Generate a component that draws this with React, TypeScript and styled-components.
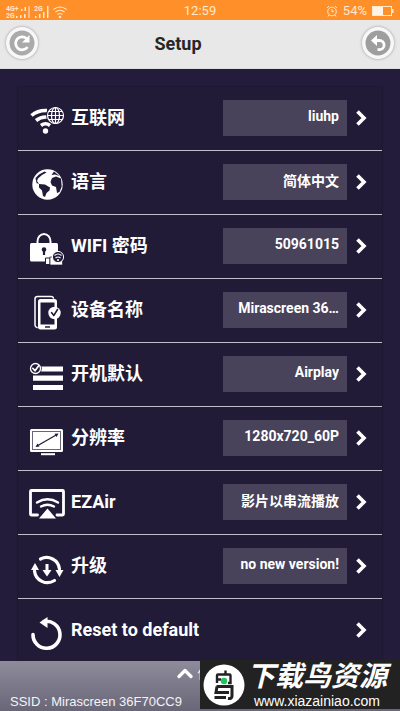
import React from "react";
import styled, { createGlobalStyle, css } from "styled-components";

const Global = createGlobalStyle`
  * { box-sizing: border-box; }
  body {
    margin: 0;
    background: #231d3b;
    font-family: Roboto, "Noto Sans CJK SC", sans-serif;
  }
`;

const Screen = styled.div`
  position: relative;
  display: flex;
  flex-direction: column;
  height: 100vh;
  overflow: hidden;
  background: #231d3b;
`;

const StatusBar = styled.div`
  display: grid;
  grid-template-columns: 1fr auto 1fr;
  align-items: center;
  flex: none;
  height: 20px;
  padding: 0 6px;
  background: #ff8f28;
  color: #ffe9cf;
  font-size: 13px;
  line-height: 22px;
`;

const StatusGroup = styled.div<{ $end?: boolean }>`
  display: flex;
  align-items: center;
  gap: 5px;
  justify-content: ${(p) => (p.$end ? "flex-end" : "flex-start")};
`;

const Header = styled.header`
  display: flex;
  align-items: center;
  justify-content: space-between;
  flex: none;
  height: 49px;
  padding: 0 6px 2px;
  background: #e8e8e8;
  border-bottom: 1px solid #dddddd;
`;

const Title = styled.h1`
  margin: 0;
  padding: 2px 44px 0 0;
  color: #262626;
  font-size: 18px;
  line-height: 24px;
  font-weight: 700;
`;

const RoundButton = styled.button`
  display: flex;
  align-items: center;
  justify-content: center;
  width: 32px;
  height: 32px;
  padding: 0;
  border: 0;
  border-radius: 50%;
  background: #f8f8f8;
  box-shadow: 0 0 3px rgba(0, 0, 0, 0.35);
`;

const Main = styled.main`
  flex: 1;
  min-height: 0;
  padding: 18px 18px 0;
  overflow-y: auto;
  scrollbar-width: none;
`;

const Panel = styled.ul`
  margin: 0;
  padding: 0;
  list-style: none;
  background: #211b38;
  box-shadow: 0 0 2px rgba(0, 0, 0, 0.4);
`;

const Row = styled.li`
  display: flex;
  align-items: center;
  height: 64px;
  padding: 0 12px 2px 11px;
  border-bottom: 1px solid #c2bfcd;
`;

const RowIcon = styled.span`
  flex: none;
  width: 36px;
  height: 36px;
  margin-top: 4px;

  svg {
    display: block;
    overflow: visible;
  }
`;

const Label = styled.label`
  flex: 1;
  margin-left: 6px;
  color: #ffffff;
  font-size: 18px;
  line-height: 24px;
  font-weight: 700;
  white-space: nowrap;
`;

const Value = styled.input`
  flex: none;
  width: 124px;
  height: 36px;
  padding: 0 8px 3px;
  border: 0;
  border-radius: 0;
  outline: 0;
  background: #48425a;
  color: #ffffff;
  font: 700 14px/20px Roboto, "Noto Sans CJK SC", sans-serif;
  text-align: right;
  text-overflow: ellipsis;
`;

const Go = styled.button`
  flex: none;
  display: flex;
  margin-left: 7px;
  padding: 0;
  border: 0;
  background: none;
`;

const Footer = styled.footer`
  display: flex;
  flex-direction: column;
  justify-content: space-between;
  flex: none;
  height: 50px;
  padding: 4px 10px 0;
  background: linear-gradient(#8e8b9b, #696678);
  color: #f4f3f7;
`;

const footerText = css`
  margin: 0;
  font: 13px/18px "Liberation Sans", "Noto Sans CJK SC", sans-serif;
  white-space: nowrap;
`;

const Expand = styled.button`
  ${footerText}
  display: flex;
  align-items: center;
  align-self: center;
  gap: 4px;
  padding: 0 12px 0 0;
  border: 0;
  background: none;
  color: inherit;
`;

const Ssid = styled.p`
  ${footerText}
`;

const Banner = styled.a`
  position: absolute;
  right: 0;
  bottom: 2px;
  display: flex;
  align-items: center;
  gap: 2px;
  width: 200px;
  height: 49px;
  padding-left: 3px;
  background: #222222;
  color: #ffffff;
  text-decoration: none;
`;

const BannerText = styled.span`
  display: flex;
  flex-direction: column;
  align-items: center;
`;

const BannerName = styled.span`
  font: italic 700 28px/32px "Liberation Sans", "Noto Sans CJK SC", sans-serif;
`;

const BannerUrl = styled.span`
  font: 14px/16px "Liberation Sans", sans-serif;
`;

const line = { fill: "none", stroke: "#fff", strokeLinecap: "round" as const, strokeLinejoin: "round" as const };

const Chevron = () => (
  <svg width="16" height="18" viewBox="0 0 16 18">
    <path d="M3.500 2.500l6.500 6.500-6.500 6.500" fill="none" stroke="#fff" strokeWidth="3.600" />
  </svg>
);

const icons: Record<string, React.ReactNode> = {
  net: (
    <g transform="translate(0 4)">
      <path d="M2.500 9.500Q9 4 18 4.500M7 14.500Q12 10.500 18 11M12 19.500q4.500-3.500 9 0" fill="none" stroke="#fff" strokeWidth="3.600" />
      <circle cx="16.500" cy="25" r="2.700" fill="#fff" />
      <circle cx="26.500" cy="9.500" r="9.400" fill="#211b38" />
      <g fill="none" stroke="#fff" strokeWidth="1.200">
        <circle cx="26.500" cy="9.500" r="8" />
        <ellipse cx="26.500" cy="9.500" rx="4" ry="8" />
        <path d="M26.500 1.500v16M18.500 9.500h16M20 5.500h13M20 13.500h13" />
      </g>
    </g>
  ),
  globe: (
    <>
      <circle cx="18.500" cy="18.500" r="15.200" fill="#fff" />
      <path d="M6.500 12L10 8.500l5.500-3 2 1-4.500 2.500-4 3.500-1 2.500 2 3-2.500-1zM10 18l6 .5 5 3-.5 3-3 2.500-1.500 4-2-1-1-5.500-3-3zM22.500 9l2.500-3.500 5.500 4.500-4.500-1.500zM23 12l4-1.500 5 2 .7 8-2.200 5.500-2.500 1-1-6-4-1.500-1.500-3.500z" fill="#211b38" />
    </>
  ),
  lock: (
    <g transform="translate(0 2)">
      <path d="M8.500 13v-3.500a6.500 7.500 0 0 1 13 0V13" fill="none" stroke="#fff" strokeWidth="2" />
      <rect x="1" y="11" width="28" height="18.500" rx="1.500" fill="#fff" />
      <circle cx="15" cy="17.500" r="2.300" fill="#211b38" />
      <path d="M15 17v6" stroke="#211b38" strokeWidth="2.200" />
      <path d="M16.500 26h4.500v6.500h-4.500z" fill="#fff" stroke="#211b38" />
      <rect x="21" y="25" width="12.500" height="8" fill="#fff" stroke="#211b38" strokeWidth=".7" />
      <circle cx="29" cy="25" r="5.600" fill="#211b38" stroke="#fff" />
      <path d="M25.500 23.500q3.500-3 7 0M26.500 26q2.500-2 5 0" fill="none" stroke="#fff" strokeWidth="1.200" />
      <circle cx="29" cy="28" r="1" fill="#fff" />
    </g>
  ),
  device: (
    <>
      <path d="M8 33.500q-2-.5-2-2.500V5q0-2.500 2.500-2.500H22q2 0 2.500 1.500" {...line} strokeWidth="1.500" />
      <path d="M11.500 5h14q2.500 0 2.500 2.500v26q0 2-2.500 2h-14q-2.500 0-2.500-2v-26Q9 5 11.500 5zM11.500 8.500v22h14v-22z" fill="#fff" fillRule="evenodd" />
      <path d="M16 33h5" stroke="#211b38" strokeWidth="1.500" />
      <circle cx="25.500" cy="19" r="6.200" fill="#fff" />
      <path d="M22.500 18.500l2.300 3 3.700-6" {...line} stroke="#211b38" strokeWidth="1.500" />
    </>
  ),
  list: (
    <g transform="translate(0 2)">
      <path d="M12 9h22M4 18.200h30M4 27.500h30" stroke="#fff" strokeWidth="5.200" />
      <circle cx="6.500" cy="8.500" r="6.300" fill="#211b38" />
      <circle cx="6.500" cy="8.500" r="5" {...line} strokeWidth="1.300" />
      <path d="M3.800 8.300l2.200 2.500 3.500-4.800" {...line} strokeWidth="1.700" />
    </g>
  ),
  screen: (
    <>
      <rect x="1" y="7" width="33" height="23" rx="1.500" fill="#fff" />
      <rect x="3.500" y="9.500" width="28" height="18" fill="none" stroke="#6b667c" />
      <path d="M8 24L28 12.500" stroke="#211b38" strokeWidth="1.300" />
      <path d="M6.500 25l2-3.500 2 3zM29.500 11.500l-4 .2 2 3.200z" fill="#211b38" />
      <path d="M12 32.200h14" stroke="#fff" strokeWidth="2" />
    </>
  ),
  air: (
    <g transform="translate(0 -1)">
      <path d="M8.500 30H2.500q-1 0-1-1V6.500q0-1 1-1h31q1 0 1 1V29q0 1-1 1h-5.500" {...line} strokeWidth="2.800" />
      <path d="M8 17.500q10.500-6.500 21 0M12 21.500q6.500-3.500 13 0" {...line} strokeWidth="2.400" />
      <path d="M10 33.500l8.500-10 8.500 10z" fill="#fff" />
    </g>
  ),
  update: (
    <>
      <path d="M11.500 9A13 13 0 0 1 30.500 19M25.500 30.500A13 13 0 0 1 5.500 21" {...line} strokeWidth="3.200" />
      <path d="M26.500 20h8l-4 7zM2 20h8l-4-7z" fill="#fff" />
      <path d="M18 14v7" stroke="#fff" strokeWidth="3" />
      <path d="M13.500 20h9L18 26.500z" fill="#fff" />
    </>
  ),
  reset: (
    <>
      <path d="M4 20.500A13.500 13.500 0 1 0 15 7.500" {...line} strokeWidth="3.600" />
      <path d="M10.500 8.500L18.500 3v11z" fill="#fff" />
    </>
  ),
};

const rows = [
  { icon: "net", label: "互联网", value: "liuhp" },
  { icon: "globe", label: "语言", value: "简体中文" },
  { icon: "lock", label: "WIFI 密码", value: "50961015" },
  { icon: "device", label: "设备名称", value: "Mirascreen 36…" },
  { icon: "list", label: "开机默认", value: "Airplay" },
  { icon: "screen", label: "分辨率", value: "1280x720_60P" },
  { icon: "air", label: "EZAir", value: "影片以串流播放" },
  { icon: "update", label: "升级", value: "no new version!" },
  { icon: "reset", label: "Reset to default", value: "" },
];

const Signals = () => (
  <svg width="62" height="16" viewBox="0 0 62 16" fill="#ffe9cf" fontFamily="Roboto" fontWeight="700">
    <text x="0" y="8" fontSize="7">4G+</text>
    <text x="0" y="15" fontSize="7">2G</text>
    <text x="28" y="8" fontSize="7">2G</text>
    <path d="M10 13h1.500v2H10zM14 12h1.500v3H14zM18 11h1.500v4H18zM15 6h1.500v2H15zM18.500 4h1.500v4h-1.500zM22.500 3h1v12h-1zM29 13h1.500v2H29zM33 11h1.500v4H33zM37 9h1.500v6H37zM41 3h1.500v12H41z" />
    <path d="M47.500 6.500q6.500-5 13 0M49.500 9q4.500-3.500 9 0M51.500 11.500q2.500-2 5 0" fill="none" stroke="#ffe9cf" strokeWidth="1.200" />
    <circle cx="54" cy="14" r="1.300" />
  </svg>
);

const Alarm = () => (
  <svg width="12" height="12" viewBox="0 0 12 12" fill="none" stroke="#ffe9cf">
    <circle cx="6" cy="6.500" r="4.300" />
    <path d="M1 3l2-2M11 3L9 1M6 4v3l2-1M3 10l-1 1.500M9 10l1 1.500" />
  </svg>
);

const Battery = () => (
  <svg width="22" height="12" viewBox="0 0 22 12">
    <rect x=".5" y="1.500" width="19" height="9" fill="none" stroke="#ffe9cf" />
    <rect x="1" y="2" width="10" height="8" fill="#fff3e4" />
    <path d="M20 4h1.500v4H20z" fill="#ffe9cf" />
  </svg>
);

export default function App() {
  return (
    <Screen>
      <Global />
      <StatusBar>
        <StatusGroup><Signals /></StatusGroup>
        <span>12:59</span>
        <StatusGroup $end><Alarm /><span>54%</span><Battery /></StatusGroup>
      </StatusBar>
      <Header>
        <RoundButton aria-label="Refresh">
          <svg width="26" height="26" viewBox="0 0 26 26">
            <circle cx="13" cy="13" r="12.500" fill="#aaa" />
            <path d="M17.500 8.500A6.500 6.500 0 1 0 18.500 17" fill="none" stroke="#fff" strokeWidth="2.800" />
            <path d="M20.500 5v7.500H13z" fill="#fff" />
          </svg>
        </RoundButton>
        <Title>Setup</Title>
        <RoundButton aria-label="Back">
          <svg width="26" height="26" viewBox="0 0 26 26">
            <circle cx="13" cy="13" r="12.500" fill="#9e9e9e" />
            <path d="M10 10.500h4.500a4.500 4.500 0 0 1 0 9.200h-2" fill="none" stroke="#fff" strokeWidth="2.800" />
            <path d="M6 10.500l6-5.500v11z" fill="#fff" />
          </svg>
        </RoundButton>
      </Header>
      <Main>
        <Panel>
          {rows.map((r) => (
            <Row key={r.icon}>
              <RowIcon><svg width="36" height="36" viewBox="0 0 36 36">{icons[r.icon]}</svg></RowIcon>
              <Label htmlFor={r.icon}>{r.label}</Label>
              {r.value && <Value id={r.icon} defaultValue={r.value} readOnly />}
              <Go id={r.value ? undefined : r.icon} aria-label={`Open ${r.label}`}><Chevron /></Go>
            </Row>
          ))}
        </Panel>
      </Main>
      <Footer>
        <Expand>
          <svg width="16" height="12" viewBox="0 0 16 12"><path d="M2 8.500l6-6 6 6" {...line} strokeWidth="3.200" /></svg>
          使
        </Expand>
        <Ssid>SSID : Mirascreen 36F70CC9</Ssid>
      </Footer>
      <Banner href="#">
        <svg width="42" height="42" viewBox="0 0 42 42">
          <circle cx="21" cy="21" r="20.500" fill="#fff" />
          <path d="M22.500 6.500v4M14 19v-7.500q0-1 1-1h11.500q1 0 1 1V19H25M14 15.500h4" fill="none" stroke="#222" strokeWidth="2.400" />
          <path d="M13.500 22.500h15.500v9.500q0 3-4 2.500M11.500 33.500h11.500M14 22.500l-1 6h13" fill="none" stroke="#222" strokeWidth="3" />
          <circle cx="21" cy="17" r="3.200" fill="#1fc35c" />
        </svg>
        <BannerText>
          <BannerName>下载鸟资源</BannerName>
          <BannerUrl>www.xiazainiao.com</BannerUrl>
        </BannerText>
      </Banner>
    </Screen>
  );
}
